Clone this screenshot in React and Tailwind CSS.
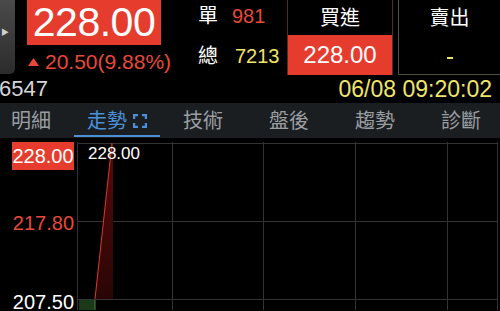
import React from "react";

const font = { fontFamily: '"Liberation Sans", "Noto Sans CJK TC", sans-serif' };

const tabs = ["明細", "走勢", "技術", "盤後", "趨勢", "診斷"];

const ExpandIcon = () => (
    <svg width="14" height="14" viewBox="0 0 14 14" className="ml-[6px]">
        <path d="M1 5V1h4M9 1h4v4M13 9v4H9M5 13H1V9" fill="none" stroke="#4a90d9" strokeWidth="2.4"/>
    </svg>
);

const Chart = () => (
    <svg width="423" height="168" viewBox="0 0 423 168" className="block">
        <defs>
            <linearGradient id="redfill" x1="0" y1="0" x2="0" y2="1">
                <stop offset="0" stopColor="#5a0a0a"/>
                <stop offset="1" stopColor="#2a0505"/>
            </linearGradient>
        </defs>
        {/* grid */}
        <g stroke="#333" strokeWidth="1">
            <line x1="0" y1="1.5" x2="420" y2="1.5"/>
            <line x1="0" y1="79.5" x2="420" y2="79.5"/>
            <line x1="0" y1="157.5" x2="420" y2="157.5"/>
            <line x1="0.5" y1="0" x2="0.5" y2="168"/>
            <line x1="95.5" y1="0" x2="95.5" y2="168"/>
            <line x1="186.5" y1="0" x2="186.5" y2="168"/>
            <line x1="278.5" y1="0" x2="278.5" y2="168"/>
            <line x1="370.5" y1="0" x2="370.5" y2="168"/>
            <line x1="420.5" y1="0" x2="420.5" y2="168"/>
        </g>
        {/* price area */}
        <polygon points="18,157 35,1 36,1 36,157" fill="url(#redfill)"/>
        <rect x="2" y="158" width="16" height="10" fill="#1c3a1a"/>
        <line x1="18" y1="168" x2="18" y2="158" stroke="#3c8a3c" strokeWidth="1"/>
        <line x1="18" y1="157" x2="35" y2="1" stroke="#d83a2e" strokeWidth="1"/>
    </svg>
);

const App = () => {
    return (
        <div className="w-[500px] h-[311px] bg-black overflow-hidden text-white" style={font}>
            {/* header */}
            <div className="flex h-[75px]">
                <div className="w-[15px] h-[74px] bg-gradient-to-b from-[#4a4a4a] to-[#2c2c2c] rounded-br-[5px] flex items-center">
                    <span className="text-[8px] text-[#cfcfcf] ml-[1px] -mt-[8px]">▶</span>
                </div>
                <div className="w-[171px] pl-[12px]">
                    <div className="w-[134px] h-[45px] bg-[#e63c2e] flex items-center justify-center">
                        <span className="text-[41px] leading-none tracking-[-0.5px]">228.00</span>
                    </div>
                    <div className="flex items-center mt-[6px] text-[#e8483a]">
                        <svg width="11" height="8" viewBox="0 0 11 8" className="ml-[1px] mr-[6px]">
                            <polygon points="5.5,0 11,8 0,8" fill="#e8483a"/>
                        </svg>
                        <span className="text-[21px] leading-none">20.50(9.88%)</span>
                    </div>
                </div>
                <div className="w-[101px] pl-[12px] pt-[2px] text-[20px] leading-none">
                    <div className="flex items-center h-[27px]">
                        <span className="w-[34px]">單</span>
                        <span className="text-[#e8483a]">981</span>
                    </div>
                    <div className="flex items-center h-[27px] mt-[13px]">
                        <span className="w-[37px]">總</span>
                        <span className="text-[#f1e469]">7213</span>
                    </div>
                </div>
                <div className="w-[106px] h-[75px] flex flex-col border-x border-[#5a2a26]">
                    <div className="h-[35px] flex items-center justify-center text-[20px]">買進</div>
                    <div className="flex-1 bg-[#e63c2e] flex items-center justify-center text-[24px]">228.00</div>
                </div>
                <div className="ml-[5px] flex-1 h-[75px] border-l border-b border-[#47533f] flex flex-col">
                    <div className="h-[35px] flex items-center justify-center text-[20px]">賣出</div>
                    <div className="flex-1 flex items-center justify-center pt-[6px]">
                        <div className="w-[6px] h-[2px] bg-[#f1e469]"/>
                    </div>
                </div>
            </div>
            {/* code + time */}
            <div className="flex justify-between items-center h-[28px] pr-[8px]">
                <span className="text-[22px] text-[#d6d6d6] leading-none -ml-[1px]">6547</span>
                <span className="text-[23px] text-[#f1e469] leading-none">06/08 09:20:02</span>
            </div>
            {/* tabs */}
            <div className="h-[35px] bg-[#1b1e21] flex -ml-[12px]">
                {tabs.map(( t , i ) => (
                    <div key={t} className="w-[86px] shrink-0 relative flex items-center justify-center text-[20px]">
                        {i === 1 ? (
                            <>
                                <span className="text-[#4a90d9]">{t}</span>
                                <ExpandIcon/>
                                <div className="absolute left-0 right-0 bottom-[1px] h-[2px] bg-[#4a90d9]"/>
                            </>
                        ) : (
                            <span className="text-[#9a9ea3]">{t}</span>
                        )}
                    </div>
                ))}
            </div>
            {/* chart */}
            <div className="flex mt-[4px]">
                <div className="w-[77px] flex flex-col items-end pr-[3px] text-[20px] leading-none">
                    <div className="w-[62px] h-[28px] bg-[#e63c2e] flex items-center justify-center">228.00</div>
                    <div className="mt-[43px] text-[#e8483a]">217.80</div>
                    <div className="mt-[59px] text-white">207.50</div>
                </div>
                <div className="relative">
                    <Chart/>
                    <span className="absolute left-[11px] top-[3px] text-[17px] leading-none">228.00</span>
                </div>
            </div>
        </div>
    );
}

export default App;
